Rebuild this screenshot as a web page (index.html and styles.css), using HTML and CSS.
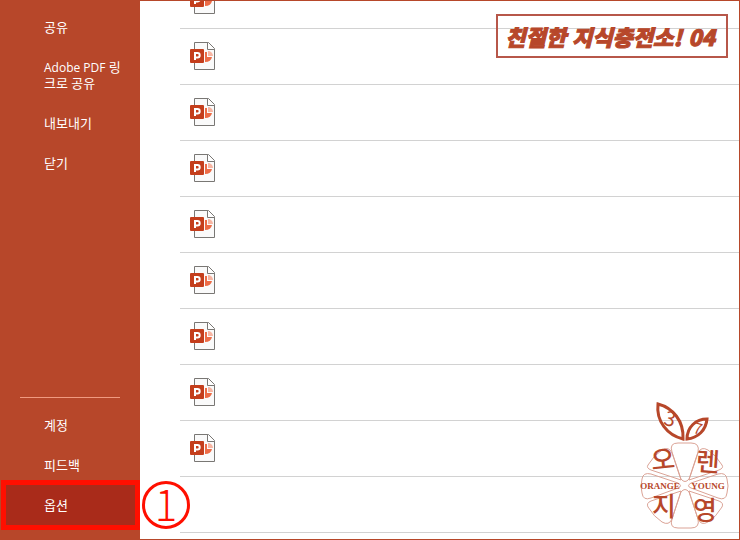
FILE: index.html
```
<!DOCTYPE html>
<html lang="ko">
	<head>
		<meta charset="utf-8">
		<meta name="viewport" content="width=device-width, initial-scale=1">
		<title>옵션</title>
		<link rel="stylesheet" href="styles.css">
	</head>
	<body>
		<svg class="symbols" aria-hidden="true">
			<symbol id="ppt" viewBox="0 0 26 28">
				<path d="M4.5.5h14l6 6v21h-20z" fill="#fafafa" stroke="#797774"/>
				<path d="M17.5.5v7h7" fill="#fff" stroke="#797774"/>
				<path d="M15 10v10a7 6 0 0 0 7-5h-5v-5z" fill="#ed6c47"/>
				<path d="M18 9a5 5 0 0 1 5 5h-5z" fill="#f7b5a2"/>
				<rect y="7" width="14" height="14" rx="1" fill="#c43e1c"/>
				<path d="M5 18v-7h2.500a2.200 2.200 0 0 1 0 4.400h-2.500" fill="none" stroke="#fff" stroke-width="2"/>
			</symbol>
		</svg>
		<div class="window">
			<nav class="sidebar">
				<button class="item">공유</button>
				<button class="item"><span class="latin">Adobe PDF</span> 링크로 공유</button>
				<button class="item">내보내기</button>
				<button class="item">닫기</button>
				<div class="bottom">
					<hr>
					<button class="item">계정</button>
					<button class="item">피드백</button>
					<button class="item active">옵션<span class="mark"></span><span class="step">1</span></button>
				</div>
			</nav>
			<main class="files">
				<ul class="list">
					<li><svg><use href="#ppt"/></svg></li>
					<li><svg><use href="#ppt"/></svg></li>
					<li><svg><use href="#ppt"/></svg></li>
					<li><svg><use href="#ppt"/></svg></li>
					<li><svg><use href="#ppt"/></svg></li>
					<li><svg><use href="#ppt"/></svg></li>
					<li><svg><use href="#ppt"/></svg></li>
					<li><svg><use href="#ppt"/></svg></li>
					<li><svg><use href="#ppt"/></svg></li>
					<li></li>
				</ul>
			</main>
			<div class="banner">친절한 지식충전소! 04</div>
			<svg class="logo" viewBox="0 0 92 130">
				<g class="leaf">
					<path d="M20 4c15 4 26 17 25 35c-16-4-27-18-25-35z"/>
					<path d="M49 39c0-12 9-20 20-20c-1 11-9 19-20 20z"/>
				</g>
				<g class="petal">
					<path d="M40 43h13q9 0 7 9l-9 27q-4 5-8 0l-9-27q-3-9 6-9z"/>
					<path d="M40 128h13q9 0 7-9l-9-27q-4-5-8 0l-9 27q-3 9 6 9z"/>
					<path d="M4 79q1-7 9-5l27 9q5 3 0 5l-27 10q-8 3-9-5q-2-7 0-14z"/>
					<path d="M89 79q-1-7-9-5l-27 9q-5 3 0 5l27 10q8 3 9-5q2-7 0-14z"/>
					<path d="M10 65q6-10 14-15q7-4 10 3l9 27l-30-10q-5-2-3-5z"/>
					<path d="M84 65q-6-10-14-15q-7-4-10 3l-9 27l30-10q5-2 3-5z"/>
					<path d="M10 107q6 10 14 15q7 4 10-3l9-28l-30 10q-5 2-3 6z"/>
					<path d="M84 107q-6 10-14 15q-7 4-10-3l-9-28l30 10q5 2 3 6z"/>
				</g>
				<g class="numbers">
					<text x="32" y="26" transform="rotate(16 32 19)">3</text>
					<text x="60" y="34" class="small" transform="rotate(16 60 29)">7</text>
				</g>
				<g class="name">
					<text x="25" y="69" transform="rotate(-6 25 60)">오</text>
					<text x="70" y="71" transform="rotate(4 70 60)">렌</text>
					<text x="26" y="116">지</text>
					<text x="67" y="120">영</text>
				</g>
				<g class="english">
					<text x="22" y="89">ORANGE</text>
					<text x="70" y="89">YOUNG</text>
				</g>
			</svg>
		</div>
	</body>
</html>
```
FILE: styles.css
```
*{
	box-sizing: border-box;
}
body{
	margin: 0;
	background: #fff;
	font-family: "Open Sans", "Noto Sans CJK KR", sans-serif;
}
.symbols{
	display: none;
}
.window{
	position: relative;
	display: flex;
	height: 100vh;
	border: 1px solid #b7472a;
	overflow: hidden;
}
.sidebar{
	display: flex;
	flex-direction: column;
	flex: none;
	width: 139px;
	padding: 6px 0 14px;
	background: #b7472a;
}
.item{
	position: relative;
	display: block;
	width: 100%;
	padding: 12px 15px 12px 43px;
	border: 0;
	background: none;
	color: #fff;
	font-family: inherit;
	font-size: 13px;
	line-height: 16px;
	text-align: left;
	word-break: break-all;
	cursor: pointer;
}
.item:hover, .item.active{
	background: #a92b1a;
}
.latin{
	font-size: 12px;
	line-height: 12px;
}
.bottom{
	margin-top: auto;
}
.bottom hr{
	height: 1px;
	margin: 0 20px 7px 19px;
	border: 0;
	background: #f09a80;
}
.mark{
	position: absolute;
	inset: -5px 0;
	border: 5px solid #ff0f00;
}
.step{
	position: absolute;
	top: -4px;
	left: 141px;
	width: 48px;
	height: 48px;
	border: 3px solid #ff0f00;
	border-radius: 50%;
	color: #ff0f00;
	font-family: "Noto Sans CJK KR", sans-serif;
	font-size: 42px;
	font-weight: 300;
	line-height: 38px;
	text-align: center;
}
.files{
	display: flex;
	flex-direction: column;
	justify-content: flex-end;
	flex: 1;
	padding: 0 0 6px 40px;
}
.list{
	margin: 0;
	padding: 0;
	list-style: none;
}
.list li{
	height: 56px;
	padding: 13px 10px;
	border-bottom: 1px solid #d2d2d2;
}
.list svg{
	display: block;
	width: 26px;
	height: 28px;
}
.banner{
	position: absolute;
	top: 13px;
	right: 11px;
	padding: 0 11px 0 7px;
	border: 2px solid #b7574a;
	color: #b7472a;
	font-family: "Noto Sans CJK KR", sans-serif;
	font-size: 22px;
	font-style: italic;
	font-weight: 900;
	line-height: 40px;
	white-space: nowrap;
	-webkit-text-stroke: 1px #b7472a;
}
.logo{
	position: absolute;
	right: 9px;
	bottom: 9px;
	width: 92px;
	height: 130px;
	fill: #b7472a;
	text-anchor: middle;
}
.leaf{
	fill: none;
	stroke: #b7472a;
	stroke-width: 3;
}
.petal{
	fill: none;
	stroke: #dba396;
}
.numbers{
	font-family: "Noto Sans CJK KR", sans-serif;
	font-size: 20px;
}
.numbers .small{
	font-size: 15px;
}
.name{
	font-family: "Noto Sans CJK KR", sans-serif;
	font-size: 26px;
	font-weight: 500;
}
.english{
	font-family: "Liberation Serif", serif;
	font-size: 9px;
	font-weight: bold;
}
```
